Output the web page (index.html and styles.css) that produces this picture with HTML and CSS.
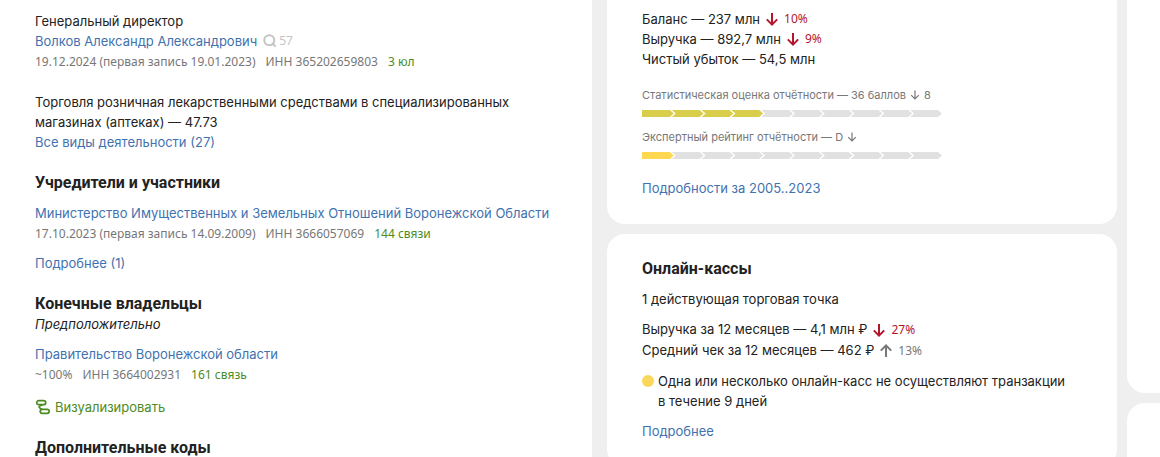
FILE: index.html
```html
<!DOCTYPE html>
<html lang="ru">
<head>
<meta charset="utf-8">
<title>Карточка компании</title>
<link rel="stylesheet" href="styles.css">
</head>
<body>
<main class="page">
  <section class="panel company">
    <div class="block block-director">
      <p>Генеральный директор</p>
      <p class="person"><a href="#">Волков Александр Александрович</a>
        <span class="views"><svg class="icon-search" viewBox="0 0 14 14"><circle cx="6.3" cy="6.3" r="5"/><path d="M9 9 12.600 12.600"/></svg>57</span></p>
      <p class="meta"><span>19.12.2024 (первая запись 19.01.2023)</span><span>ИНН 365202659803</span><a class="green" href="#">3 юл</a></p>
    </div>
    <div class="block block-activity">
      <p>Торговля розничная лекарственными средствами в специализированных магазинах (аптеках) — 47.73</p>
      <p><a href="#">Все виды деятельности (27)</a></p>
    </div>
    <h2>Учредители и участники</h2>
    <div class="block">
      <p><a href="#">Министерство Имущественных и Земельных Отношений Воронежской Области</a></p>
      <p class="meta"><span>17.10.2023 (первая запись 14.09.2009)</span><span>ИНН 3666057069</span><a class="green" href="#">144 связи</a></p>
    </div>
    <p class="block"><a href="#">Подробнее (1)</a></p>
    <h2>Конечные владельцы</h2>
    <p class="note">Предположительно</p>
    <div class="block">
      <p><a href="#">Правительство Воронежской области</a></p>
      <p class="meta"><span>~100%</span><span>ИНН 3664002931</span><a class="green" href="#">161 связь</a></p>
    </div>
    <p class="visualize"><a class="green" href="#"><svg class="icon-graph" viewBox="0 0 16 16"><rect x="1.700" y="1.700" width="9" height="4" rx="2"/><rect x="5.200" y="10.300" width="9" height="4" rx="2"/><path d="M7.500 5.700 4.700 7.100Q3.600 8 4.700 8.900L7 10.500"/></svg>Визуализировать</a></p>
    <h2>Дополнительные коды</h2>
  </section>

  <div class="column finance">
    <section class="panel card card-report">
      <p class="stat">Баланс — 237 млн <span class="change red"><svg class="arrow" viewBox="0 0 14 14"><path d="M7 1V12.500M1.800 7.400 7 12.600 12.200 7.400"/></svg>10%</span></p>
      <p class="stat">Выручка — 892,7 млн <span class="change red"><svg class="arrow" viewBox="0 0 14 14"><path d="M7 1V12.500M1.800 7.400 7 12.600 12.200 7.400"/></svg>9%</span></p>
      <p class="stat">Чистый убыток — 54,5 млн</p>
      <div class="rating">
        <p class="small">Статистическая оценка отчётности — 36 баллов <svg class="arrow-small" viewBox="0 0 10 10"><path d="M5 .5V9M1.200 5.200 5 9 8.800 5.200"/></svg> 8</p>
        <div class="scale"><i class="olive"></i><i class="olive"></i><i class="olive"></i><i class="olive"></i><i></i><i></i><i></i><i></i><i></i><i></i></div>
      </div>
      <div class="rating">
        <p class="small">Экспертный рейтинг отчётности — D <svg class="arrow-small" viewBox="0 0 10 10"><path d="M5 .5V9M1.200 5.200 5 9 8.800 5.200"/></svg></p>
        <div class="scale"><i class="yellow"></i><i></i><i></i><i></i><i></i><i></i><i></i><i></i><i></i><i></i></div>
      </div>
      <p class="details"><a href="#">Подробности за 2005..2023</a></p>
    </section>
    <section class="panel card card-cash">
      <h2>Онлайн-кассы</h2>
      <p class="block">1 действующая торговая точка</p>
      <div class="block">
        <p class="stat">Выручка за 12 месяцев — 4,1 млн ₽ <span class="change red"><svg class="arrow" viewBox="0 0 14 14"><path d="M7 1V12.500M1.800 7.400 7 12.600 12.200 7.400"/></svg>27%</span></p>
        <p class="stat">Средний чек за 12 месяцев — 462 ₽ <span class="change gray"><svg class="arrow" viewBox="0 0 14 14"><path d="M7 13V1.500M1.800 6.600 7 1.400 12.200 6.600"/></svg>13%</span></p>
      </div>
      <p class="block warning"><span class="dot"></span><span>Одна или несколько онлайн-касс не осуществляют транзакции<br>в течение 9 дней</span></p>
      <p class="block"><a href="#">Подробнее</a></p>
    </section>
  </div>

  <div class="column side">
    <section class="panel card side-top"></section>
    <section class="panel card side-bottom"></section>
  </div>
</main>
</body>
</html>
```

FILE: styles.css
```css
* { box-sizing: border-box; }
body {
  margin: 0;
  background: #efefef;
  color: #222;
  font: 13px/20px Inter, "Liberation Sans", sans-serif;
}
h2, p { margin: 0; }
h2 { font: 700 16px/21px Roboto, "Liberation Sans", sans-serif; margin-top: 20px; }
a { color: #3f72af; text-decoration: none; }
.green { color: #4c8c23; }
.red { color: #b3152c; }
.gray { color: #777; }
svg { fill: none; stroke: currentColor; }

.page {
  display: grid;
  grid-template-columns: minmax(0, 592fr) minmax(0, 515fr) minmax(0, 33fr);
  grid-template-rows: 100%;
  gap: 10px;
  height: 100vh;
  overflow: hidden;
}
.panel { background: #fff; }
.company { padding: 11px 35px 0; }
.block { margin-top: 10px; }
.block-director { margin-top: 0; }
.block-activity { margin-top: 21px; }
.person { display: flex; align-items: center; gap: 6px; }
.views, .meta, .change { font-family: "Noto Sans", sans-serif; font-size: 12px; }
.views { display: flex; align-items: center; gap: 2px; color: #c4c4c4; }
.icon-search { width: 14px; height: 14px; stroke-width: 2; }
.meta { display: flex; gap: 10px; padding-top: 2px; line-height: 18px; color: #777; }
.note { font-style: italic; }
.visualize { margin-top: 13px; }
.visualize a { display: flex; align-items: center; gap: 4px; }
.icon-graph { width: 16px; height: 16px; stroke-width: 1.7; }

.column { display: flex; flex-direction: column; gap: 10px; }
.finance { padding-left: 5px; }
.card { border-radius: 18px; flex: none; padding: 24px 35px 26px; }
.card-report { padding-top: 9px; border-radius: 0 0 18px 18px; }
.card-cash h2 { margin-top: 0; }
.card-cash .stat { line-height: 21px; }
.stat { display: flex; align-items: center; gap: 5px; }
.change { display: flex; align-items: center; gap: 5px; }
.arrow { width: 14px; height: 14px; stroke-width: 2; }
.small { display: flex; align-items: center; gap: 4px; color: #777; font-size: 11px; }
.arrow-small { width: 10px; height: 10px; stroke-width: 1.2; }
.rating { margin-top: 10px; }
.stat + .rating { margin-top: 16px; }
.scale { display: flex; width: 300px; max-width: 100%; height: 7px; margin-top: 5px; }
.scale i {
  flex: 1;
  margin-right: -2px;
  background: #e1e1e1;
  clip-path: polygon(0 0, calc(100% - 4px) 0, 100% 50%, calc(100% - 4px) 100%, 0 100%, 4px 50%);
}
.scale i:first-child { clip-path: polygon(0 0, calc(100% - 4px) 0, 100% 50%, calc(100% - 4px) 100%, 0 100%); }
.scale i:last-child { margin-right: 0; }
.scale .olive { background: #d9ce4b; }
.scale .yellow { background: #ffd750; }
.details { margin-top: 19px; }
.warning { display: flex; gap: 4px; }
.dot { flex: none; width: 12px; height: 12px; margin-top: 4px; border-radius: 50%; background: #fbd75b; }
.side .card { padding: 0; }
.side .side-top { flex: 1; border-radius: 0 0 0 18px; }
.side .side-bottom { height: 54px; border-radius: 18px 0 0 0; }
```
